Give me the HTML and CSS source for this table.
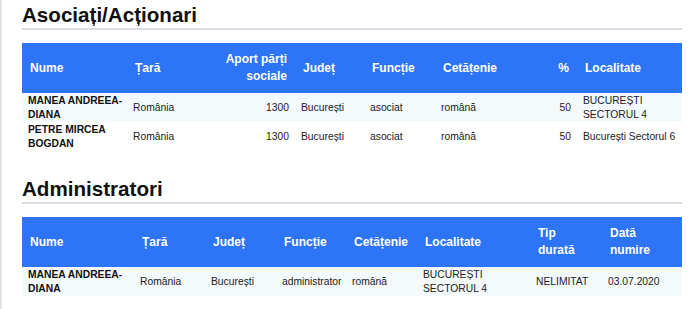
FILE: index.html
```html
<!DOCTYPE html>
<html lang="ro">
<head>
<meta charset="utf-8">
<title>Asociați/Acționari</title>
<link rel="stylesheet" href="styles.css">
</head>
<body>
<main class="page">
  <section class="section">
    <h2 class="section-title">Asociați/Acționari</h2>
    <table class="grid grid-assoc">
      <colgroup>
        <col class="w105"><col class="w78"><col class="w90"><col class="w69"><col class="w71"><col class="w105"><col class="w37"><col class="w105">
      </colgroup>
      <thead>
        <tr>
          <th>Nume</th>
          <th>Țară</th>
          <th class="num">Aport părți sociale</th>
          <th>Județ</th>
          <th>Funcție</th>
          <th>Cetățenie</th>
          <th class="num">%</th>
          <th>Localitate</th>
        </tr>
      </thead>
      <tbody>
        <tr class="odd">
          <td class="name">MANEA ANDREEA-DIANA</td>
          <td>România</td>
          <td class="num">1300</td>
          <td>București</td>
          <td>asociat</td>
          <td>română</td>
          <td class="num">50</td>
          <td class="last">BUCUREȘTI SECTORUL 4</td>
        </tr>
        <tr>
          <td class="name">PETRE MIRCEA BOGDAN</td>
          <td>România</td>
          <td class="num">1300</td>
          <td>București</td>
          <td>asociat</td>
          <td>română</td>
          <td class="num">50</td>
          <td class="last">București Sectorul 6</td>
        </tr>
      </tbody>
    </table>
  </section>

  <section class="section">
    <h2 class="section-title">Administratori</h2>
    <table class="grid grid-admin">
      <colgroup>
        <col class="w112"><col class="w71"><col class="w71"><col class="w70"><col class="w71"><col class="w113"><col class="w72"><col class="w80">
      </colgroup>
      <thead>
        <tr>
          <th>Nume</th>
          <th>Țară</th>
          <th>Județ</th>
          <th>Funcție</th>
          <th>Cetățenie</th>
          <th>Localitate</th>
          <th class="narrow">Tip durată</th>
          <th class="narrow">Dată numire</th>
        </tr>
      </thead>
      <tbody>
        <tr class="odd">
          <td class="name">MANEA ANDREEA-DIANA</td>
          <td>România</td>
          <td>București</td>
          <td>administrator</td>
          <td>română</td>
          <td>BUCUREȘTI SECTORUL 4</td>
          <td>NELIMITAT</td>
          <td class="last">03.07.2020</td>
        </tr>
      </tbody>
    </table>
  </section>
</main>
</body>
</html>
```

FILE: styles.css
```css
html, body {
  margin: 0;
  padding: 0;
  background: #ffffff;
}

body {
  font-family: "Liberation Sans", Arial, sans-serif;
  color: #1e1e1e;
  min-height: 100vh;
  box-sizing: border-box;
  border-left: 2px solid #e3e3e3;
}

.page {
  width: 660px;
  padding: 2px 0 0 20px;
}

.section + .section {
  margin-top: 25px;
}

.section-title {
  margin: 0;
  font-size: 20.6px;
  line-height: 26px;
  font-weight: bold;
  color: #111;
  border-bottom: 2px solid #d9dce4;
}

.grid {
  margin-top: 13px;
  width: 660px;
  table-layout: fixed;
  border-collapse: collapse;
  border-spacing: 0;
}

.grid th {
  background: #2d74f6;
  color: #ffffff;
  font-size: 12px;
  line-height: 17px;
  font-weight: bold;
  text-align: left;
  padding: 8px 3px 8px 8px;
  vertical-align: middle;
}

.grid th.num {
  text-align: right;
  padding: 8px 8px 8px 3px;
}

.grid th.narrow {
  padding-right: 12px;
}

.grid td {
  font-size: 10.3px;
  line-height: 14px;
  padding: 1px 2px 0 6px;
  vertical-align: middle;
  color: #222;
}

.grid td.num {
  text-align: right;
  padding: 1px 6px 0 2px;
}

.grid td.last {
  padding-right: 0;
}

.grid td.name {
  font-weight: bold;
  color: #111;
}

.grid tr.odd td {
  background: #f4f9fc;
}

.w37 { width: 37px; }
.w69 { width: 69px; }
.w70 { width: 70px; }
.w71 { width: 71px; }
.w72 { width: 72px; }
.w78 { width: 78px; }
.w80 { width: 80px; }
.w90 { width: 90px; }
.w105 { width: 105px; }
.w112 { width: 112px; }
.w113 { width: 113px; }
```
